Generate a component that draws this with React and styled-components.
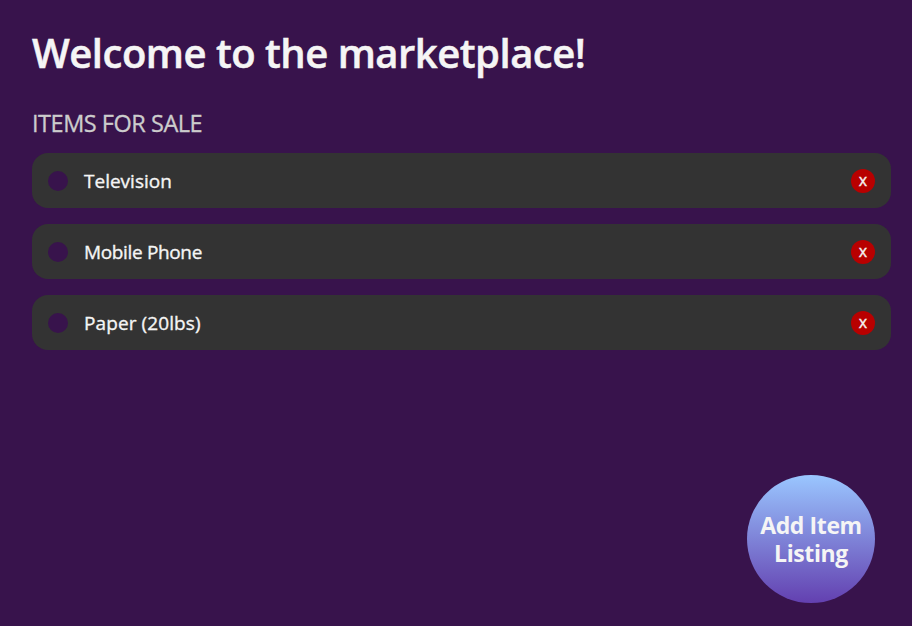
import React from "react";
import styled, { createGlobalStyle } from "styled-components";

const GlobalStyle = createGlobalStyle`
  * { box-sizing: border-box; }
  body {
    margin: 0;
    background: #38134c;
    color: #f5f5f5;
    font-family: "Trebuchet MS", "Open Sans", "Noto Sans", sans-serif;
  }
`;

const Page = styled.main`
  height: 626px;
  padding: 29px 21px 0 32px;
  display: flex;
  flex-direction: column;
  overflow: hidden;
`;

const Title = styled.h1`
  margin: 0;
  font-size: 40px;
  font-weight: 600;
  line-height: 48px;
  letter-spacing: -0.5px;
  -webkit-text-stroke: 0.5px currentColor;
  white-space: nowrap;
`;

const Subtitle = styled.h2`
  margin: 30px 0 0;
  color: #cccccc;
  font-size: 23.5px;
  font-weight: 400;
  line-height: 32px;
  letter-spacing: -0.47px;
  -webkit-text-stroke: 0.3px currentColor;
  text-transform: uppercase;
`;

const ItemList = styled.ul`
  list-style: none;
  margin: 14px 0 0;
  padding: 0;
  display: flex;
  flex-direction: column;
  gap: 16px;
`;

const ItemRow = styled.li`
  height: 55px;
  padding: 0 16px;
  display: flex;
  align-items: center;
  gap: 16px;
  border-radius: 16px;
  background: #333333;
`;

const Bullet = styled.span`
  width: 20px;
  height: 20px;
  border-radius: 50%;
  background: #38134c;
`;

const ItemName = styled.span`
  flex: 1;
  font-size: 19px;
  line-height: 24px;
  letter-spacing: ${({ $tracking }) => $tracking}px;
  -webkit-text-stroke: 0.35px currentColor;
`;

const RemoveButton = styled.button`
  width: 24px;
  height: 24px;
  padding: 0 0 2px;
  border: 0;
  border-radius: 50%;
  background: #b80000;
  color: #f5f5f5;
  font: 400 16px/22px "Trebuchet MS", "Open Sans", sans-serif;
  -webkit-text-stroke: 0.35px currentColor;
`;

const AddButton = styled.button`
  width: 128px;
  height: 128px;
  margin: auto 16px 23px auto;
  padding: 0;
  border: 0;
  border-radius: 50%;
  background: linear-gradient(#9ac6ff, #6340b0);
  color: #f5f5f5;
  font: 700 23px/28px "Trebuchet MS", "Open Sans", sans-serif;
  letter-spacing: -0.4px;
`;

const items = [
  { name: "Television", tracking: 0 },
  { name: "Mobile Phone", tracking: -0.35 },
  { name: "Paper (20lbs)", tracking: 0.1 },
];

export default function App() {
  return (
    <>
      <GlobalStyle />
      <Page>
        <Title>Welcome to the marketplace!</Title>
        <Subtitle>Items for sale</Subtitle>
        <ItemList>
          {items.map(({ name, tracking }) => (
            <ItemRow key={name}>
              <Bullet />
              <ItemName $tracking={tracking}>{name}</ItemName>
              <RemoveButton>x</RemoveButton>
            </ItemRow>
          ))}
        </ItemList>
        <AddButton>
          Add Item
          <br />
          Listing
        </AddButton>
      </Page>
    </>
  );
}
